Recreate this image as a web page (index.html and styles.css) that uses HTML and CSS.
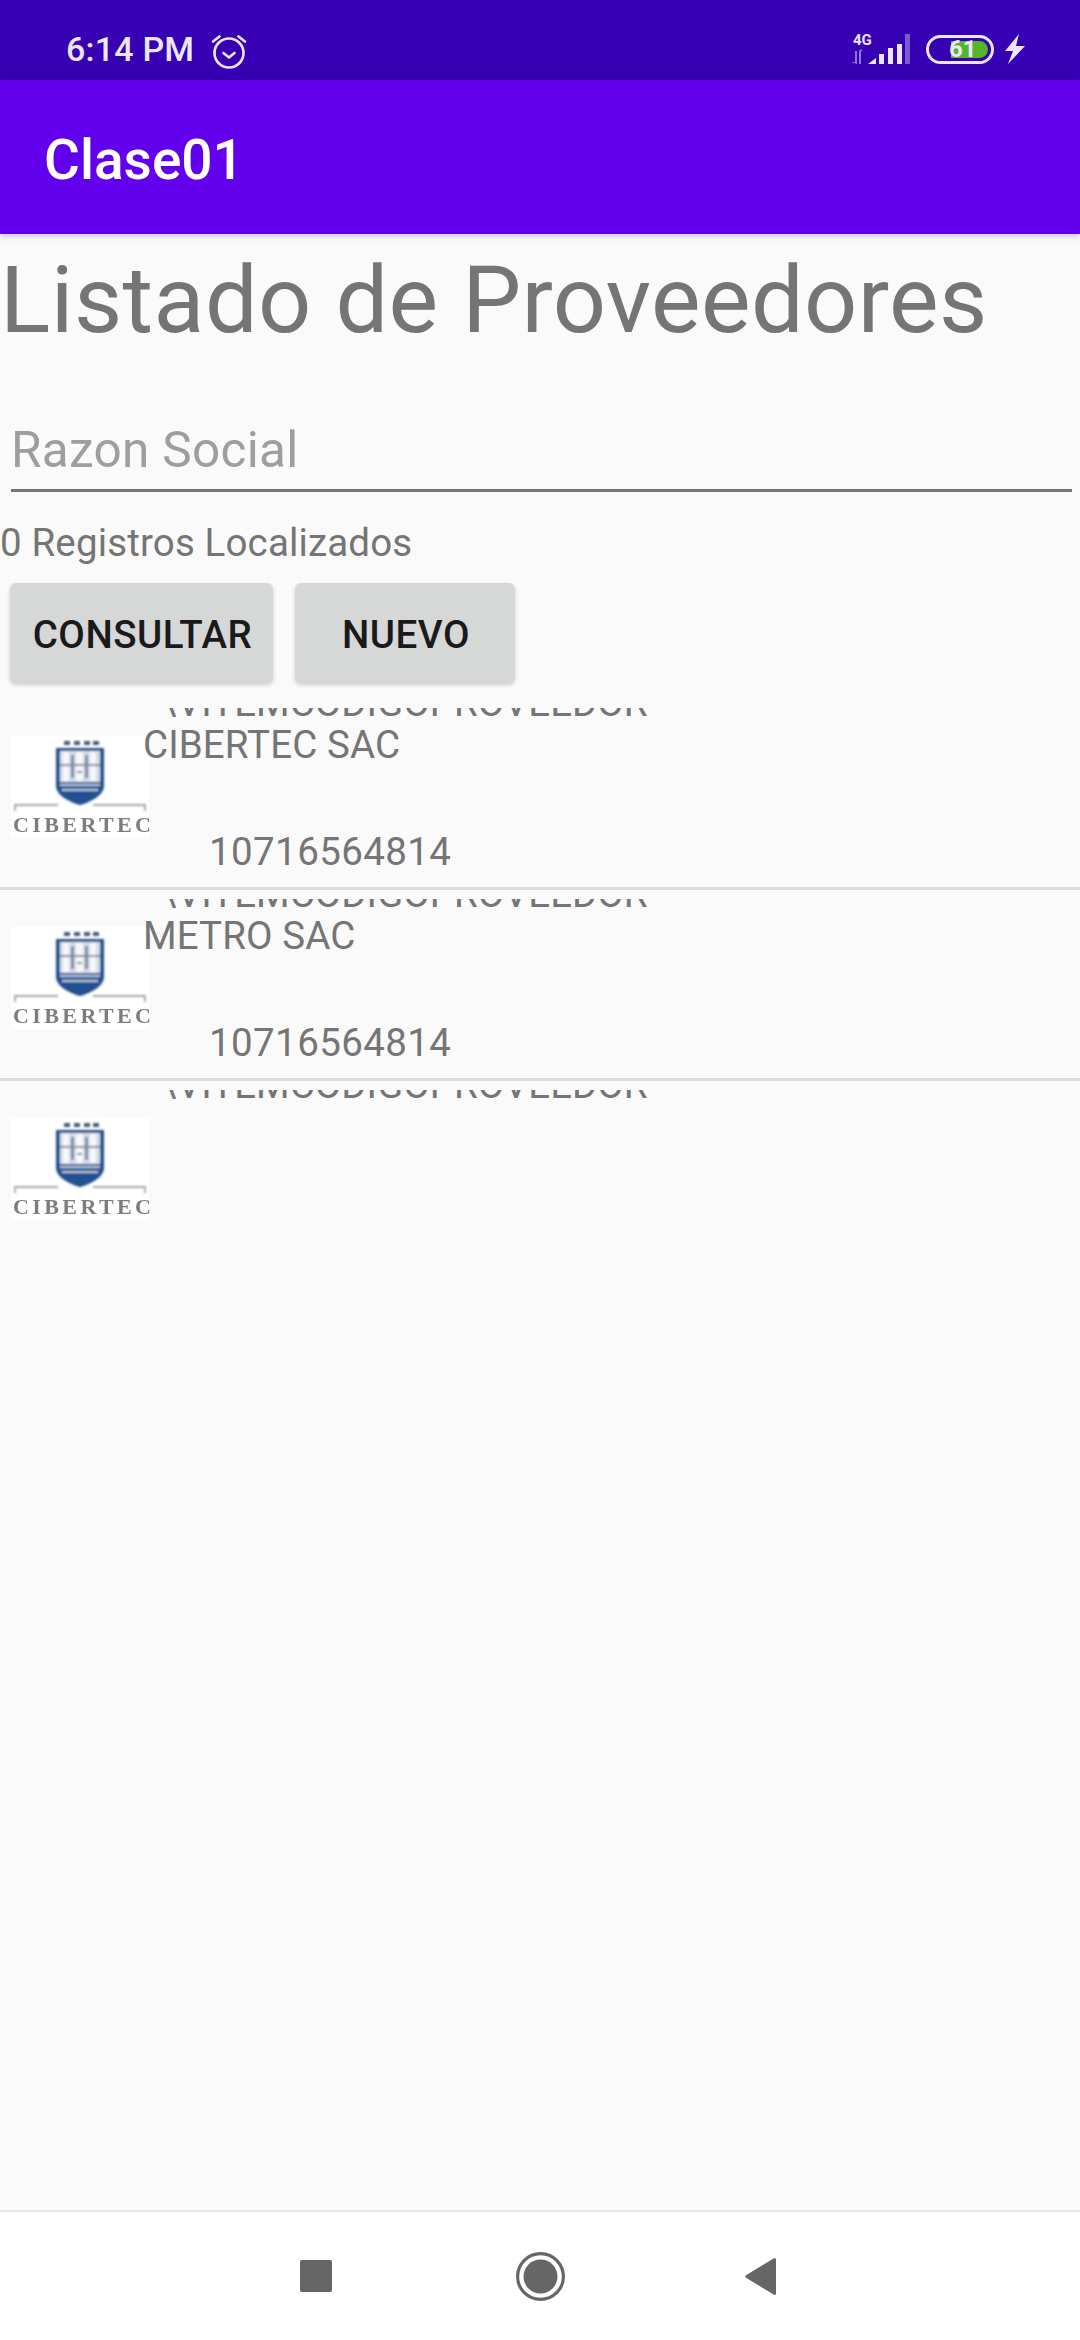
FILE: index.html
```html
<!DOCTYPE html>
<html lang="es">
<head>
<meta charset="utf-8">
<title>Clase01</title>
<link rel="stylesheet" href="styles.css">
</head>
<body>
<svg class="defs" width="0" height="0" aria-hidden="true">
  <defs>
    <filter id="soft"><feGaussianBlur stdDeviation="0.8"/></filter>
    <symbol id="logo" viewBox="0 0 138 102">
      <rect width="138" height="102" fill="#fff"/>
      <g filter="url(#soft)">
        <g fill="#4a5a7e">
          <rect x="53" y="5" width="6" height="4"/><rect x="63" y="5" width="6" height="4"/>
          <rect x="73" y="5" width="6" height="4"/><rect x="82" y="5" width="6" height="4"/>
        </g>
        <path d="M45 12H93V50C93 59 80 66 69 69C58 66 45 59 45 50Z" fill="#20508f"/>
        <rect x="49" y="15" width="40" height="31" fill="#d5dbe6"/>
        <g fill="#f6f7fa">
          <rect x="52" y="16" width="6" height="29"/><rect x="65" y="16" width="7" height="29"/><rect x="79" y="16" width="6" height="29"/>
        </g>
        <g fill="#7c8aa5">
          <rect x="60" y="19" width="3" height="23"/><rect x="74" y="19" width="3" height="23"/>
          <rect x="49" y="28" width="40" height="2"/><rect x="66" y="35" width="5" height="2"/>
        </g>
        <rect x="49" y="48" width="40" height="2" fill="#b5c7e0"/>
        <rect x="51" y="53" width="36" height="2" fill="#b5c7e0"/>
        <path d="M4 75V69H47M82 69H134V75" fill="none" stroke="#8a8a8a" stroke-width="1.4"/>
      </g>
    </symbol>
  </defs>
</svg>

<header class="status">
  <div class="status-left">
    <span class="time">6:14 PM</span>
    <svg class="alarm" width="36" height="36" viewBox="0 0 36 36" fill="none" stroke="#ece6fb" stroke-width="2.6" stroke-linecap="round" stroke-linejoin="round">
      <circle cx="18" cy="20" r="14.5"/>
      <path d="M12.500 20l5.500 4.500 5.500-4.500"/>
      <path d="M2 8.500 8.500 3.500M34 8.500 27.500 3.500"/>
    </svg>
  </div>
  <div class="status-right">
    <svg class="signal" width="62" height="32" viewBox="0 0 62 32">
      <text class="net" x="5" y="12">4G</text>
      <path d="M3 29 7 29V18H9V31ZM11 18 15 18 13 16ZM11 18H13V31H11Z" fill="#8f77dd"/>
      <path d="M20 31 28 25V31Z M31 31V21H36V31Z M40 31V15H45V31Z M49 31V11H54V31Z" fill="#ece6fb"/>
      <rect x="57" y="1" width="5" height="30" fill="#7a5bd6"/>
    </svg>
    <div class="battery"><span class="battery-fill"></span><span class="battery-level">61</span></div>
    <svg class="bolt" width="20" height="30" viewBox="0 0 20 30">
      <path d="M14 0 0 17H8L3 30 20 12H11Z" fill="#ece6fb"/>
    </svg>
  </div>
</header>

<div class="appbar"><h1 class="appbar-title">Clase01</h1></div>

<main class="content">
  <h2 class="heading">Listado de Proveedores</h2>
  <div class="field"><span class="placeholder">Razon Social</span></div>
  <p class="count">0 Registros Localizados</p>
  <div class="actions">
    <button class="btn btn-consult">CONSULTAR</button>
    <button class="btn btn-new">NUEVO</button>
  </div>

  <section class="list">
    <article class="row">
      <div class="clip"><span class="clip-text">\VITEMCODIGOPROVEEDOR</span></div>
      <div class="row-body">
        <div class="logo"><svg width="138" height="102"><use href="#logo"/></svg><span class="logo-name">CIBERTEC</span></div>
        <div class="row-text">
          <p class="name">CIBERTEC SAC</p>
          <p class="ruc">10716564814</p>
        </div>
      </div>
    </article>
    <article class="row">
      <div class="clip"><span class="clip-text">\VITEMCODIGOPROVEEDOR</span></div>
      <div class="row-body">
        <div class="logo"><svg width="138" height="102"><use href="#logo"/></svg><span class="logo-name">CIBERTEC</span></div>
        <div class="row-text">
          <p class="name">METRO SAC</p>
          <p class="ruc">10716564814</p>
        </div>
      </div>
    </article>
    <article class="row row-last">
      <div class="clip"><span class="clip-text">\VITEMCODIGOPROVEEDOR</span></div>
      <div class="row-body">
        <div class="logo"><svg width="138" height="102"><use href="#logo"/></svg><span class="logo-name">CIBERTEC</span></div>
      </div>
    </article>
  </section>
</main>

<nav class="navbar">
  <svg width="32" height="32" viewBox="0 0 32 32" class="nav-square"><rect width="32" height="32" rx="2" fill="#666"/></svg>
  <svg width="49" height="49" viewBox="0 0 49 49" class="nav-circle">
    <circle cx="24.500" cy="24.500" r="22.900" fill="none" stroke="#666" stroke-width="3.200"/>
    <circle cx="24.500" cy="24.500" r="17" fill="#666"/>
  </svg>
  <svg width="31" height="37" viewBox="0 0 31 37" class="nav-back"><path d="M29 .3a1.500 1.500 0 0 1 2 1.400V35.300a1.500 1.500 0 0 1-2 1.400L1 19.800a1.500 1.500 0 0 1 0-2.600Z" fill="#666"/></svg>
</nav>
</body>
</html>
```

FILE: styles.css
```css
* { box-sizing: border-box; }

html, body {
  margin: 0;
  padding: 0;
}

body {
  width: 1080px;
  height: 2340px;
  background: #fafafa;
  font-family: Roboto, "Liberation Sans", sans-serif;
  color: #757575;
  display: flex;
  flex-direction: column;
  overflow: hidden;
}

.defs { position: absolute; }

p, h1, h2 { margin: 0; font-weight: 400; }

/* Status bar */
.status {
  height: 80px;
  flex: none;
  background: #3700b3;
  display: flex;
  justify-content: space-between;
  align-items: center;
  padding: 18px 55px 0 66px;
  color: #ece6fb;
}

.status-left {
  display: flex;
  align-items: center;
  gap: 17px;
}

.time {
  font-size: 34px;
  font-weight: 500;
  line-height: 40px;
  letter-spacing: 0.2px;
}

.alarm { margin-top: 3px; }

.status-right {
  display: flex;
  align-items: center;
}

.signal { margin-right: 16px; }

.net {
  font-family: Roboto, sans-serif;
  font-size: 15px;
  font-weight: 700;
  fill: #ece6fb;
}

.battery {
  width: 68px;
  height: 29px;
  border: 3px solid #ece6fb;
  border-radius: 15px;
  padding: 3px;
  position: relative;
  margin-right: 11px;
  display: flex;
  justify-content: flex-end;
}

.battery-fill {
  width: 37px;
  background: #55b52c;
  border-radius: 0 10px 10px 0;
}

.battery-level {
  position: absolute;
  left: 20px;
  top: -3px;
  font-size: 24px;
  line-height: 29px;
  font-weight: 700;
  color: #ece6fb;
}

/* App bar */
.appbar {
  height: 154px;
  flex: none;
  background: #6200ee;
  display: flex;
  align-items: center;
  padding: 5px 0 0 44px;
  box-shadow: 0 2px 6px rgba(0, 0, 0, 0.22);
  position: relative;
}

.appbar-title {
  font-size: 55px;
  font-weight: 500;
  color: #fff;
  line-height: 64px;
}

/* Content */
.content {
  flex: 1;
  min-height: 0;
  display: flex;
  flex-direction: column;
}

.heading {
  font-size: 93.5px;
  line-height: 110px;
  letter-spacing: 0.42px;
  margin-top: 11px;
}

.field {
  margin: 64px 8px 0 11px;
  height: 73px;
  border-bottom: 3px solid #757575;
  display: flex;
  align-items: flex-end;
  padding-bottom: 10px;
}

.placeholder {
  font-size: 49.5px;
  line-height: 58px;
  letter-spacing: 0.3px;
  color: #9e9e9e;
}

.count {
  font-size: 38.5px;
  line-height: 45px;
  letter-spacing: 0.15px;
  margin-top: 28px;
}

.actions {
  display: flex;
  gap: 22px;
  padding-left: 10px;
  margin-top: 18px;
}

.btn {
  height: 100px;
  border: 0;
  border-radius: 6px;
  background: #d6d7d7;
  color: #1a1a1a;
  font-family: Roboto, sans-serif;
  font-size: 38.5px;
  font-weight: 500;
  letter-spacing: 0.5px;
  padding: 2px 0 0 2px;
  box-shadow: 0 2px 4px rgba(0, 0, 0, 0.18);
}

.btn-consult { width: 263px; }
.btn-new { width: 220px; }

/* List */
.list {
  margin-top: 16px;
  display: flex;
  flex-direction: column;
}

.row {
  height: 191px;
  padding-top: 9px;
  border-bottom: 3px solid #dcdcdc;
  flex: none;
}

.row-last { border-bottom: 0; }

.clip {
  height: 9px;
  overflow: hidden;
  padding-left: 161px;
}

.clip-text {
  display: block;
  font-size: 38.5px;
  line-height: 45px;
  margin-top: -28px;
  white-space: nowrap;
}

.row-body {
  display: flex;
  align-items: flex-start;
  padding-left: 11px;
}

.logo {
  width: 138px;
  height: 102px;
  margin-top: 19px;
  flex: none;
  position: relative;
}

.logo svg { display: block; }

.logo-name {
  position: absolute;
  left: 2px;
  top: 77px;
  font-family: "Liberation Serif", serif;
  font-size: 22px;
  font-weight: 700;
  line-height: 24px;
  letter-spacing: 3.4px;
  color: #7d7d7d;
  white-space: nowrap;
  filter: blur(0.7px);
}

.row-text {
  margin-left: -6px;
  position: relative;
}

.name {
  font-size: 38.5px;
  line-height: 45px;
  letter-spacing: 0.1px;
  margin-top: 5px;
}

.ruc {
  font-size: 38.5px;
  line-height: 45px;
  letter-spacing: 0.4px;
  margin-top: 62px;
  padding-left: 66px;
}

/* Navigation bar */
.navbar {
  height: 130px;
  flex: none;
  background: #fff;
  border-top: 2px solid #e8e8e8;
  display: flex;
  align-items: center;
  padding-left: 300px;
}

.nav-square { margin-right: 184px; }
.nav-circle { margin-right: 180px; }
```
